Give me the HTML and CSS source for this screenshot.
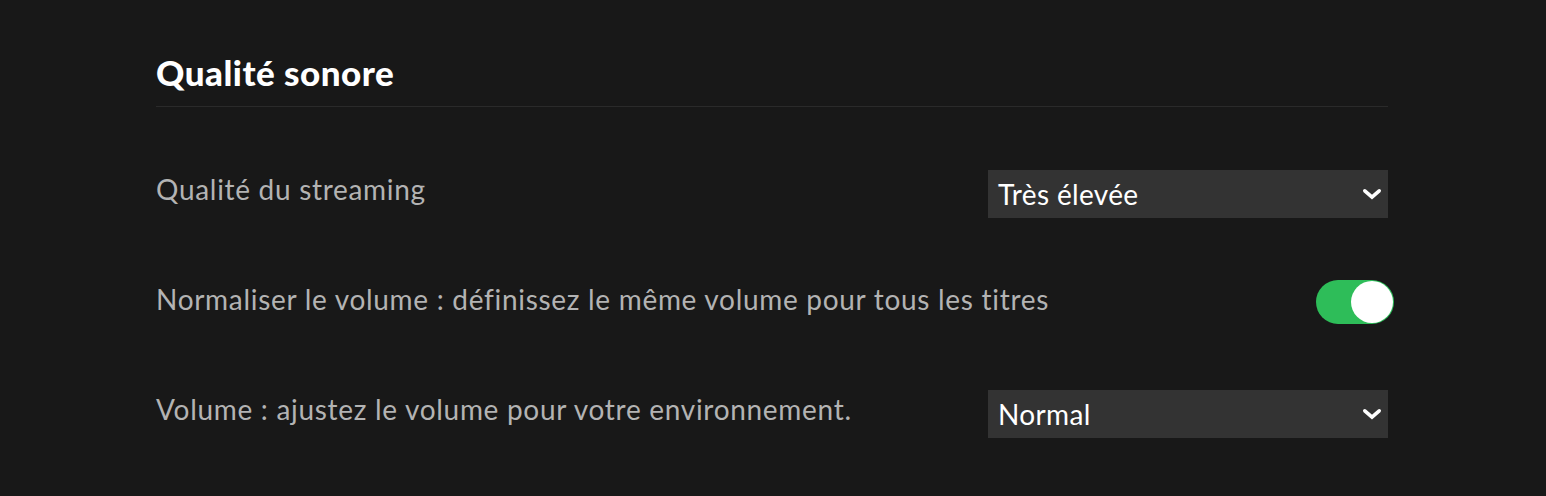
FILE: index.html
```html
<!DOCTYPE html>
<html lang="fr">
<head>
<meta charset="utf-8">
<link rel="stylesheet" href="styles.css">
</head>
<body>
<section class="settings">
  <h2 class="title">Qualité sonore</h2>
  <div class="row row-first">
    <div class="label">Qualité du streaming</div>
    <div class="select"><span class="select-text">Très élevée</span>
      <svg class="chev" width="20" height="12" viewBox="0 0 20 12"><path d="M2.8 2.8 L10 9.2 L17.2 2.8" fill="none" stroke="#fff" stroke-width="3.6" stroke-linecap="round" stroke-linejoin="miter"/></svg>
    </div>
  </div>
  <div class="row row-toggle">
    <div class="label">Normaliser le volume : définissez le même volume pour tous les titres</div>
    <div class="toggle"><span class="knob"></span></div>
  </div>
  <div class="row row-last">
    <div class="label">Volume : ajustez le volume pour votre environnement.</div>
    <div class="select"><span class="select-text">Normal</span>
      <svg class="chev" width="20" height="12" viewBox="0 0 20 12"><path d="M2.8 2.8 L10 9.2 L17.2 2.8" fill="none" stroke="#fff" stroke-width="3.6" stroke-linecap="round" stroke-linejoin="miter"/></svg>
    </div>
  </div>
</section>
</body>
</html>
```

FILE: styles.css
```css
html, body {
  margin: 0;
  padding: 0;
  background: #181818;
  height: 100%;
}
body {
  font-family: "Lato", "Noto Sans", sans-serif;
  overflow: hidden;
}
.settings {
  margin-left: 156px;
  width: 1232px;
  padding-top: 51px;
}
.title {
  margin: 0;
  font-size: 35px;
  font-weight: 900;
  letter-spacing: 0.5px;
  color: #fff;
  line-height: 42px;
  padding-bottom: 13px;
  border-bottom: 1px solid #2a2a2a;
}
.row {
  display: flex;
  justify-content: space-between;
  align-items: flex-start;
}
.row-first { margin-top: 63px; }
.row-toggle { margin-top: 62px; }
.row-last { margin-top: 66px; }
.label {
  color: #b3b3b3;
  font-size: 28px;
  line-height: 34px;
  letter-spacing: 0.7px;
  padding-top: 2px;
}
.select {
  width: 400px;
  height: 48px;
  background: #333333;
  display: flex;
  align-items: center;
  justify-content: space-between;
  padding: 0 6px 0 10px;
  box-sizing: border-box;
  color: #fff;
  font-size: 28px;
  line-height: 34px;
  letter-spacing: 0.35px;
}
.chev { display: block; }
.toggle {
  width: 78px;
  height: 44px;
  border-radius: 22px;
  background: #2ebd59;
  margin-right: -6px;
  position: relative;
}
.knob {
  position: absolute;
  right: 1px;
  top: 1px;
  width: 42px;
  height: 42px;
  border-radius: 50%;
  background: #fff;
}
```
